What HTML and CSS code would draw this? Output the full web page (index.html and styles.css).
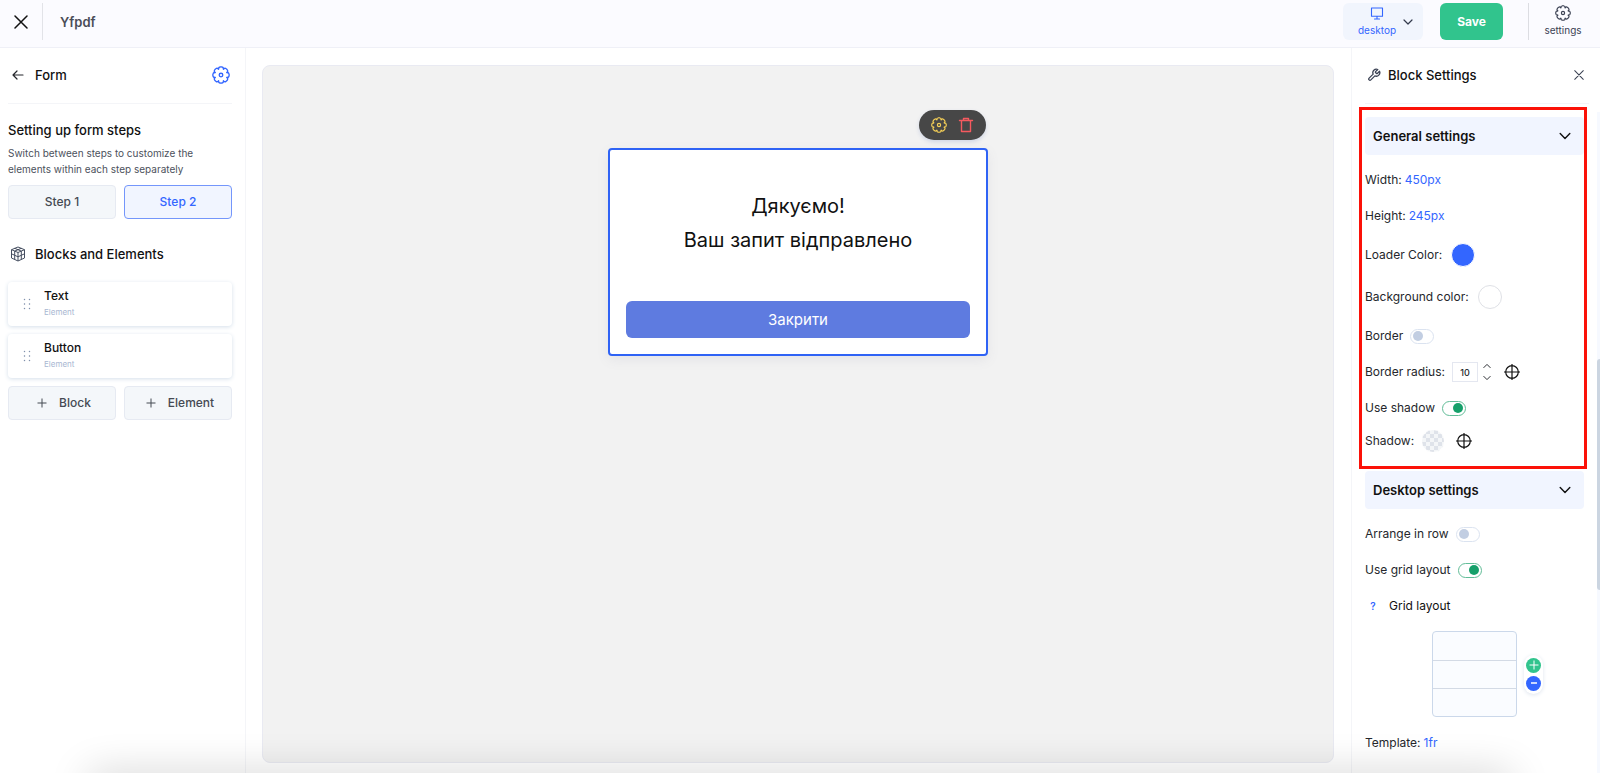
FILE: index.html
```html
<!DOCTYPE html>
<html lang="en">
<head>
<meta charset="utf-8">
<title>Yfpdf</title>
<link rel="stylesheet" href="styles.css">
</head>
<body>
<svg class="sprite" aria-hidden="true">
  <symbol id="gear" viewBox="-12 -12 24 24">
    <g fill="none" stroke="currentColor" stroke-linecap="round" stroke-linejoin="round">
      <path id="tooth" d="M-3.300-7.900C-3.300-8.900-2.700-10.600-1.500-10.700Q0-11 1.500-10.700C2.700-10.600 3.300-8.900 3.300-7.900"/>
      <use href="#tooth" transform="rotate(45)"/><use href="#tooth" transform="rotate(90)"/>
      <use href="#tooth" transform="rotate(135)"/><use href="#tooth" transform="rotate(180)"/>
      <use href="#tooth" transform="rotate(225)"/><use href="#tooth" transform="rotate(270)"/>
      <use href="#tooth" transform="rotate(315)"/>
      <circle r="2.400"/>
    </g>
  </symbol>
  <symbol id="chevron" viewBox="0 0 10 10"><path d="M1 3l4 4 4-4" fill="none" stroke="currentColor" stroke-width="1.200" stroke-linecap="round" stroke-linejoin="round"/></symbol>
  <symbol id="cross" viewBox="0 0 14 14"><path d="M1 1l12 12M13 1L1 13" fill="none" stroke="currentColor" stroke-linecap="round"/></symbol>
  <symbol id="target" viewBox="0 0 16 16"><path d="M8 0v16M0 8h16M14.300 8A6.300 6.300 0 1 1 1.700 8a6.300 6.300 0 0 1 12.600 0z" fill="none" stroke="currentColor" stroke-width="1.200"/></symbol>
  <symbol id="dots" viewBox="0 0 8 12"><path d="M1 1h1v1H1zM6 1h1v1H6zM1 5.500h1v1H1zM6 5.500h1v1H6zM1 10h1v1H1zM6 10h1v1H6z" fill="currentColor" stroke="currentColor" stroke-width=".3"/></symbol>
  <symbol id="plus" viewBox="0 0 10 10"><path d="M5 .5v9M.5 5h9" fill="none" stroke="currentColor"/></symbol>
</svg>

<header class="topbar">
  <button class="icon-btn topbar-close" aria-label="Close"><svg class="i14 bold"><use href="#cross"/></svg></button>
  <h1 class="topbar-title">Yfpdf</h1>
  <button class="device">
    <span class="device-name">
      <svg class="device-icon" viewBox="0 0 14 13"><path d="M1.500 1h11v8.300h-11zM7 9.300v2.500M4.500 12h5" fill="none" stroke="currentColor" stroke-width="1.100" stroke-linejoin="round" stroke-linecap="round"/></svg>
      desktop
    </span>
    <svg class="i10 dark"><use href="#chevron"/></svg>
  </button>
  <button class="save">Save</button>
  <button class="settings"><svg class="i16 gear-line"><use href="#gear"/></svg>settings</button>
</header>

<div class="workspace">
  <aside class="left">
    <div class="left-head">
      <button class="icon-btn" aria-label="Back"><svg class="i12" viewBox="0 0 12 12"><path d="M11 6H1.500M5 2L1 6l4 4" fill="none" stroke="currentColor" stroke-width="1.200" stroke-linecap="round" stroke-linejoin="round"/></svg></button>
      <h2 class="heading">Form</h2>
      <button class="icon-btn accent push" aria-label="Form settings"><svg class="i18 gear-line"><use href="#gear"/></svg></button>
    </div>
    <h2 class="heading steps-title">Setting up form steps</h2>
    <p class="hint">Switch between steps to customize the elements within each step separately</p>
    <div class="pair">
      <button class="tile">Step 1</button>
      <button class="tile tile-active">Step 2</button>
    </div>
    <div class="blocks-head">
      <svg class="i16" viewBox="0 0 16 16"><path d="M8 1l6.500 2.700v8.300L8 15l-6.500-3V3.700zM1.500 3.700L8 6.500l6.500-2.800M8 6.500V15M4.700 5.100v8.400M11.300 5.100v8.400M1.500 7.800L8 10.800l6.500-3M4.700 2.300l6.600 2.800M11.300 2.300L4.700 5.100" fill="none" stroke="currentColor" stroke-linejoin="round"/></svg>
      <h2 class="heading">Blocks and Elements</h2>
    </div>
    <ul class="cards">
      <li class="card"><svg class="dots"><use href="#dots"/></svg><div><div class="card-name">Text</div><div class="card-kind">Element</div></div></li>
      <li class="card"><svg class="dots"><use href="#dots"/></svg><div><div class="card-name">Button</div><div class="card-kind">Element</div></div></li>
    </ul>
    <div class="pair">
      <button class="tile tile-add"><svg class="i10"><use href="#plus"/></svg>Block</button>
      <button class="tile tile-add"><svg class="i10"><use href="#plus"/></svg>Element</button>
    </div>
  </aside>

  <main class="canvas">
    <div class="popup">
      <div class="popup-tools">
        <button class="icon-btn yellow" aria-label="Settings"><svg class="i16 gear-line"><use href="#gear"/></svg></button>
        <button class="icon-btn red" aria-label="Delete"><svg class="i16" viewBox="0 0 16 16"><path d="M1.500 3.500h13M3.500 3.500V14.500h9V3.500M5.500 3.500V1.500h5v2" fill="none" stroke="currentColor" stroke-width="1.400" stroke-linejoin="round" stroke-linecap="round"/></svg></button>
      </div>
      <p class="popup-text">Дякуємо!<br>Ваш запит відправлено</p>
      <button class="popup-btn">Закрити</button>
    </div>
  </main>

  <aside class="right">
    <div class="right-head">
      <svg class="i14" viewBox="0 0 24 24"><path d="M14.700 6.300a1 1 0 0 0 0 1.400l1.600 1.600a1 1 0 0 0 1.400 0l3.770-3.770a6 6 0 0 1-7.940 7.940l-6.910 6.910a2.120 2.120 0 0 1-3-3l6.910-6.910a6 6 0 0 1 7.940-7.940l-3.760 3.760z" fill="none" stroke="currentColor" stroke-width="2.200" stroke-linejoin="round"/></svg>
      <h2 class="heading">Block Settings</h2>
      <button class="icon-btn push" aria-label="Close panel"><svg class="i10 bold"><use href="#cross"/></svg></button>
    </div>

    <section class="group group-marked">
      <button class="group-head">General settings<svg class="i12"><use href="#chevron"/></svg></button>
      <div class="rows">
        <div class="row">Width: <a class="value" href="#width">450px</a></div>
        <div class="row">Height: <a class="value" href="#height">245px</a></div>
        <div class="row row-tall">Loader Color: <button class="swatch swatch-blue" aria-label="Loader color"></button></div>
        <div class="row row-tall">Background color: <button class="swatch swatch-white" aria-label="Background color"></button></div>
        <div class="row"><label for="border">Border</label><input class="toggle" type="checkbox" id="border"></div>
        <div class="row"><label for="radius">Border radius:</label><input class="num" id="radius" type="text" value="10">
          <span class="stepper"><button class="icon-btn flip" aria-label="Increase"><svg class="i8"><use href="#chevron"/></svg></button><button class="icon-btn" aria-label="Decrease"><svg class="i8"><use href="#chevron"/></svg></button></span>
          <button class="icon-btn aim aim-wide" aria-label="Corners"><svg class="i16"><use href="#target"/></svg></button></div>
        <div class="row"><label for="shadow">Use shadow</label><input class="toggle" type="checkbox" id="shadow" checked></div>
        <div class="row row-short">Shadow: <button class="swatch swatch-clear" aria-label="Shadow color"></button><button class="icon-btn aim" aria-label="Shadow offset"><svg class="i16"><use href="#target"/></svg></button></div>
      </div>
    </section>

    <section class="group">
      <button class="group-head">Desktop settings<svg class="i12"><use href="#chevron"/></svg></button>
      <div class="rows">
        <div class="row"><label for="inrow">Arrange in row</label><input class="toggle" type="checkbox" id="inrow"></div>
        <div class="row"><label for="usegrid">Use grid layout</label><input class="toggle" type="checkbox" id="usegrid" checked></div>
        <div class="row row-help"><button class="help" aria-label="Help">?</button>Grid layout</div>
      </div>
      <div class="grid-edit">
        <div class="grid-box"><span class="cell"></span><span class="cell"></span><span class="cell"></span></div>
        <div class="grid-btns">
          <button class="round green" aria-label="Add row"><svg class="i10"><use href="#plus"/></svg></button>
          <button class="round blue" aria-label="Remove row"><svg class="i10" viewBox="0 0 10 10"><path d="M2 5h6" stroke="currentColor" stroke-width="1.500"/></svg></button>
        </div>
      </div>
      <div class="row">Template: <a class="value" href="#template">1fr</a></div>
    </section>
    <div class="track"><div class="thumb"></div></div>
  </aside>
</div>
<div class="bottom-shade"></div>
</body>
</html>
```

FILE: styles.css
```css
* { box-sizing: border-box; }
body {
  margin: 0;
  height: 100vh;
  display: flex;
  flex-direction: column;
  overflow: hidden;
  font: 12px/16px Inter, "Liberation Sans", sans-serif;
  color: #25272c;
  background: #fff;
}
h1, h2, p, ul { margin: 0; padding: 0; }
button, input { font: inherit; color: inherit; margin: 0; }
button { border: 0; padding: 0; background: none; cursor: pointer; }
a { text-decoration: none; }
svg { display: block; flex: none; }
.sprite { position: absolute; width: 0; height: 0; }
.i8 { width: 8px; height: 8px; }
.i10 { width: 10px; height: 10px; }
.i12 { width: 12px; height: 12px; }
.i14 { width: 14px; height: 14px; }
.i16 { width: 16px; height: 16px; }
.i18 { width: 18px; height: 18px; }
.bold { stroke-width: 1.5; }
.gear-line { stroke-width: 1.8; }
.dark { color: #333a4d; }
.accent { color: #3366ff; }
.yellow { color: #f5cf57; }
.red { color: #f65a5f; }
.icon-btn { display: flex; }
.push { margin-left: auto; }
.heading { font-size: 13px; line-height: 20px; font-weight: 500; color: #111; }

.topbar {
  flex: none;
  display: flex;
  height: 48px;
  padding: 3px 13px 7px 0;
  background: #fbfbff;
  border-bottom: 1px solid #eff0f7;
}
.topbar-close { width: 43px; padding-left: 14px; align-items: center; border-right: 1px solid #e2e3e8; color: #111; }
.topbar-title { margin: 0 auto 0 17px; align-self: center; font-size: 13px; line-height: 20px; font-weight: 600; color: #4a4d57; }
.device { display: flex; align-items: center; gap: 7px; width: 80px; padding-left: 15px; border-radius: 6px; background: #f1f5fd; }
.device-name { display: flex; flex-direction: column; align-items: center; gap: 3px; font-size: 10px; line-height: 14px; color: #3366ff; }
.device-icon { width: 14px; height: 13px; }
.save { width: 63px; margin-left: 17px; border-radius: 6px; background: #31c48d; color: #fff; font-size: 12px; font-weight: 700; }
.settings { display: flex; flex-direction: column; align-items: center; gap: 2px; width: 59px; margin-left: 25px; padding: 2px 0 0 10px; border-left: 1px solid #dcdde2; font-size: 10px; line-height: 14px; color: #3c4254; }

.workspace { flex: 1; display: flex; min-height: 0; }
.left { flex: none; width: 246px; padding: 0 13px 0 8px; border-right: 1px solid #f4f5f8; }
.left-head { display: flex; align-items: center; gap: 11px; height: 56px; padding: 0 2px 2px 4px; border-bottom: 1px solid #f4f5f8; }
.steps-title { margin-top: 16px; }
.hint { margin-top: 5px; font-size: 10px; color: #4c515c; }
.pair { display: grid; grid-template-columns: 1fr 1fr; gap: 8px; margin-top: 8px; }
.tile { display: flex; align-items: center; justify-content: center; height: 34px; border: 1px solid #e6eaf2; border-radius: 4px; background: #f4f7fa; color: #454a53; font-weight: 500; }
.tile-active { border-color: #7496fb; background: #f1f5ff; color: #3366ff; }
.tile-add { gap: 12px; padding-left: 4px; }
.blocks-head { display: flex; align-items: center; gap: 9px; margin: 25px 0 18px 2px; color: #454e60; }
.cards { list-style: none; display: flex; flex-direction: column; gap: 8px; }
.card { display: flex; align-items: center; gap: 13px; height: 44px; padding-left: 15px; border-radius: 4px; box-shadow: 0 1px 4px #d5dfea; }
.dots { width: 8px; height: 12px; color: #8091ad; }
.card-name { color: #111; font-weight: 500; }
.card-kind { font-size: 8px; color: #a9b7d2; }

.canvas { flex: 1; min-width: 0; margin: 17px 17px 10px 16px; padding-top: 82px; border: 1px solid #e9eaf2; border-radius: 8px; background: #f2f2f2; }
.popup { position: relative; width: 380px; margin: 0 auto; padding: 39px 16px 16px; border: 2px solid #2f63f5; border-radius: 4px; background: #fff; box-shadow: 0 4px 12px #e4e4e7; }
.popup-tools { position: absolute; right: 0; top: -40px; display: flex; gap: 11px; padding: 7px 12px; border-radius: 15px; background: #474747; box-shadow: 0 2px 4px #cfd5e4; }
.popup-text { font-size: 20px; line-height: 34px; color: #111; text-align: center; }
.popup-btn { display: block; width: 100%; height: 37px; margin-top: 44px; border-radius: 6px; background: #5e7be0; color: #fff; font-size: 15px; }

.right { position: relative; flex: none; width: 249px; padding: 0 16px 0 13px; border-left: 1px solid #f4f5f8; overflow: hidden; }
.right-head { display: flex; align-items: center; gap: 7px; height: 56px; margin-right: -5px; padding: 0 5px 2px 2px; border-bottom: 1px solid #f4f5f8; color: #3a4153; }
.group-marked { margin: 3px -3px 2px -6px; padding: 7px 0 10px 3px; border: 3px solid #fb1108; }
.group-head { display: flex; align-items: center; justify-content: space-between; width: 100%; height: 38px; padding: 0 13px 0 8px; border-radius: 4px; background: #f1f5ff; color: #111; font-size: 13px; font-weight: 600; }
.rows { padding-top: 7px; }
.row { display: flex; align-items: center; gap: 3px; height: 36px; white-space: nowrap; }
.row-tall { height: 42px; }
.row-short { height: 30px; }
.value { color: #3366ff; }
.swatch { width: 24px; height: 24px; margin-left: 6px; border: 1px solid #fff; border-radius: 50%; }
.swatch-blue { background: #3366ff; }
.swatch-white { border-color: #dfe1e6; background: #fff; }
.swatch-clear { margin-left: 4px; background: repeating-conic-gradient(#dfe3ea 0 25%, #f4f6f8 0 50%) 0 0 / 8px 8px; }
.toggle { appearance: none; display: flex; align-items: center; width: 24px; height: 15px; margin-left: 4px; padding: 0 2px; border: 1px solid #dbe3f0; border-radius: 8px; background: #fff; }
.toggle::before { content: ""; width: 10px; height: 10px; border-radius: 50%; background: #c2cee2; }
.toggle:checked { justify-content: flex-end; border-color: #62bd98; }
.toggle:checked::before { background: #16a06a; }
.num { width: 26px; height: 20px; margin-left: 4px; padding: 0; border: 1px solid #e4e7f0; text-align: center; font-size: 9px; font-weight: 500; }
.stepper { display: flex; flex-direction: column; gap: 4px; margin-left: 2px; }
.flip { transform: scaleY(-1); }
.aim { margin-left: 8px; color: #111; }
.aim-wide { margin-left: 10px; }
.row-help { gap: 8px; color: #111; }
.help { width: 16px; color: #3366ff; font-size: 10px; font-weight: 600; }
.grid-edit { display: flex; align-items: center; gap: 7px; margin: 7px 0 8px 67px; }
.grid-box { display: grid; grid-template-rows: repeat(3, 28px); width: 85px; border: 1px solid #cbd8ea; border-radius: 4px; background: #fafcff; }
.cell + .cell { border-top: 1px solid #d3dae5; }
.grid-btns { display: flex; flex-direction: column; gap: 3px; padding: 3px 2px; border-radius: 10px; background: #fff; box-shadow: 0 1px 4px #dfe5ee; }
.round { display: flex; align-items: center; justify-content: center; width: 15px; height: 15px; border-radius: 50%; color: #fff; }
.green { background: #31c48d; }
.blue { background: #3366ff; }
.track { position: absolute; right: 0; top: 64px; bottom: 0; width: 3px; background: #f6f9ff; }
.thumb { height: 35%; margin-top: 247px; border-radius: 3px 0 0 3px; background: #cbd5e1; }

.bottom-shade { position: fixed; left: 90px; right: 90px; top: 100%; height: 20px; border-radius: 20px; box-shadow: 0 4px 40px 4px #0000002e; pointer-events: none; }
```
